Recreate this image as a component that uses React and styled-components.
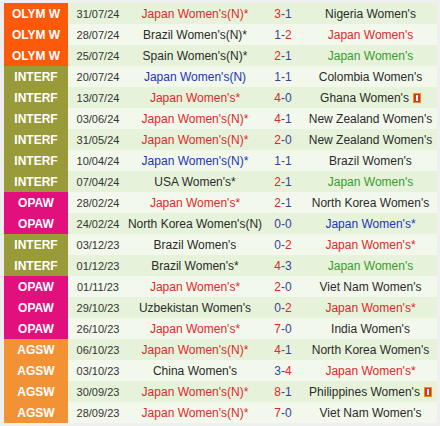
import React from "react";
import styled, { createGlobalStyle } from "styled-components";

const Global = createGlobalStyle`
  html, body { margin: 0; padding: 0; background: #efefef; }
  body { font-family: "Liberation Sans", Arial, sans-serif; }
`;

const LEAGUE_BG = {
  "OLYM W": "#fa5a0a",
  INTERF: "#999a3a",
  OPAW: "#e2107d",
  AGSW: "#f39235",
};

const RESULT_COLOR = {
  W: "#e2262b",
  D: "#2233bb",
  L: "#3a9a2e",
  N: "#2a2a2a",
};

const rows = [
  ["OLYM W", "31/07/24", "Japan Women's(N)*", "W", "3-1", "Nigeria Women's", "N", false],
  ["OLYM W", "28/07/24", "Brazil Women's(N)*", "N", "1-2", "Japan Women's", "W", false],
  ["OLYM W", "25/07/24", "Spain Women's(N)*", "N", "2-1", "Japan Women's", "L", false],
  ["INTERF", "20/07/24", "Japan Women's(N)", "D", "1-1", "Colombia Women's", "N", false],
  ["INTERF", "13/07/24", "Japan Women's*", "W", "4-0", "Ghana Women's", "N", true],
  ["INTERF", "03/06/24", "Japan Women's(N)*", "W", "4-1", "New Zealand Women's", "N", false],
  ["INTERF", "31/05/24", "Japan Women's(N)*", "W", "2-0", "New Zealand Women's", "N", false],
  ["INTERF", "10/04/24", "Japan Women's(N)*", "D", "1-1", "Brazil Women's", "N", false],
  ["INTERF", "07/04/24", "USA Women's*", "N", "2-1", "Japan Women's", "L", false],
  ["OPAW", "28/02/24", "Japan Women's*", "W", "2-1", "North Korea Women's", "N", false],
  ["OPAW", "24/02/24", "North Korea Women's(N)", "N", "0-0", "Japan Women's*", "D", false],
  ["INTERF", "03/12/23", "Brazil Women's", "N", "0-2", "Japan Women's*", "W", false],
  ["INTERF", "01/12/23", "Brazil Women's*", "N", "4-3", "Japan Women's", "L", false],
  ["OPAW", "01/11/23", "Japan Women's*", "W", "2-0", "Viet Nam Women's", "N", false],
  ["OPAW", "29/10/23", "Uzbekistan Women's", "N", "0-2", "Japan Women's*", "W", false],
  ["OPAW", "26/10/23", "Japan Women's*", "W", "7-0", "India Women's", "N", false],
  ["AGSW", "06/10/23", "Japan Women's(N)*", "W", "4-1", "North Korea Women's", "N", false],
  ["AGSW", "03/10/23", "China Women's", "N", "3-4", "Japan Women's*", "W", false],
  ["AGSW", "30/09/23", "Japan Women's(N)*", "W", "8-1", "Philippines Women's", "N", true],
  ["AGSW", "28/09/23", "Japan Women's(N)*", "W", "7-0", "Viet Nam Women's", "N", false],
];

const Table = styled.div`
  margin: 3px 3px 0 4px;
  width: 433px;
  display: flex;
  flex-direction: column;
`;

const Row = styled.div`
  display: grid;
  grid-template-columns: 64px 60px 134px 42px 1fr;
  height: 21px;
  align-items: stretch;
  background: ${(p) => (p.$odd ? "#e6f3da" : "#f2f9ec")};
`;

const League = styled.div`
  background: ${(p) => p.$bg};
  color: #fff;
  font-weight: bold;
  font-size: 12px;
  display: flex;
  align-items: center;
  justify-content: center;
  white-space: nowrap;
`;

const Cell = styled.div`
  display: flex;
  align-items: center;
  justify-content: center;
  white-space: nowrap;
  font-size: ${(p) => p.$size || 12}px;
  color: ${(p) => p.$color || "#2a2a2a"};
`;

const ScoreHi = styled.span`
  color: #e2262b;
`;
const ScoreLo = styled.span`
  color: #3a3f9a;
`;

const Card = styled.svg`
  margin-left: 4px;
  flex: none;
`;

function Score({ value }) {
  const [a, b] = value.split("-");
  const na = +a;
  const nb = +b;
  if (na > nb)
    return (
      <>
        <ScoreHi>{a}</ScoreHi>
        <ScoreLo>-{b}</ScoreLo>
      </>
    );
  if (na < nb)
    return (
      <>
        <ScoreLo>{a}-</ScoreLo>
        <ScoreHi>{b}</ScoreHi>
      </>
    );
  return <ScoreLo>{value}</ScoreLo>;
}

function RedCard() {
  return (
    <Card width="8" height="10" viewBox="0 0 8 10">
      <rect x="0" y="0" width="8" height="10" fill="#d9361a" />
      <rect x="0.5" y="0.5" width="7" height="9" fill="none" stroke="#f08a20" strokeWidth="1" />
      <rect x="3" y="2" width="2" height="6" fill="#ffffff" />
    </Card>
  );
}

export default function App() {
  return (
    <>
      <Global />
      <Table>
        {rows.map((r, i) => (
          <Row key={i} $odd={i % 2 === 0}>
            <League $bg={LEAGUE_BG[r[0]]}>{r[0]}</League>
            <Cell $size={11} $color="#333">{r[1]}</Cell>
            <Cell $color={RESULT_COLOR[r[3]]}>{r[2]}</Cell>
            <Cell>
              <Score value={r[4]} />
            </Cell>
            <Cell $color={RESULT_COLOR[r[6]]}>
              {r[5]}
              {r[7] && <RedCard />}
            </Cell>
          </Row>
        ))}
      </Table>
    </>
  );
}
